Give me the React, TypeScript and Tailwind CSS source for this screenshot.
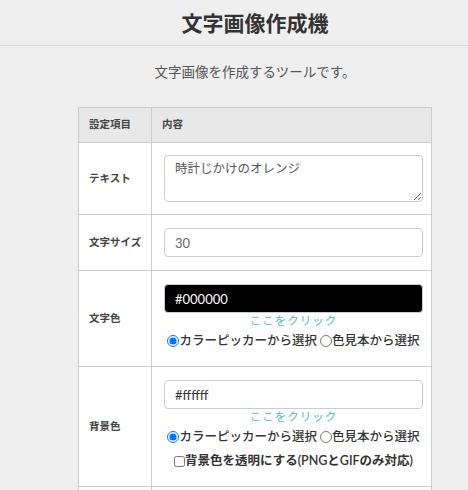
import { useState } from "react"

const font = "font-['Lato','Noto_Sans_CJK_JP',sans-serif]"

function ColorField({
  value,
  dark,
  name,
  transparentOption,
}: {
  value: string
  dark?: boolean
  name: string
  transparentOption?: boolean
}) {
  const [mode, setMode] = useState("picker")

  return (
    <div className="flex flex-col">
      <input
        type="text"
        readOnly
        value={value}
        className={`h-[29px] w-full rounded-[4px] border border-[#cccccc] px-[10px] text-[13px] outline-none ${
          dark ? "bg-black text-white" : "bg-white text-[#333]"
        }`}
      />
      <div className="h-[16px] text-center text-[11.5px] leading-[16px] tracking-[1px] text-[#4fc4a6]">
        ここをクリック
      </div>
      <div className="flex h-[24px] items-center justify-center text-[12.5px] font-medium text-[#333]">
        <label className="flex items-center">
          <input
            type="radio"
            name={name}
            checked={mode === "picker"}
            onChange={() => setMode("picker")}
            className="m-0 h-[12px] w-[12px]"
          />
          カラーピッカーから選択
        </label>
        <label className="ml-[3px] flex items-center">
          <input
            type="radio"
            name={name}
            checked={mode === "sample"}
            onChange={() => setMode("sample")}
            className="m-0 h-[12px] w-[12px]"
          />
          色見本から選択
        </label>
      </div>
      {transparentOption && (
        <label className="flex h-[24px] items-center justify-center text-[12.5px] font-semibold text-[#333]">
          <input type="checkbox" className="m-0 h-[11px] w-[11px]" />
          背景色を透明にする(PNGとGIFのみ対応)
        </label>
      )}
    </div>
  )
}

export default function App() {
  return (
    <div className={`min-h-screen bg-[#efefef] ${font}`}>
      {/* Header */}
      <header className="flex h-[46px] items-center border-b border-[#d9d9d9] pl-[42px]">
        <h1 className="flex-1 text-center text-[21px] font-bold text-[#333]">文字画像作成機</h1>
      </header>

      <main className="pl-[42px]">
        <p className="pt-[16px] text-center text-[13.5px] leading-[20px] text-[#555]">
          文字画像を作成するツールです。
        </p>

        <table className="mx-auto mt-[25px] w-[354px] table-fixed border-collapse bg-white">
          <colgroup>
            <col className="w-[73px]" />
            <col />
          </colgroup>
          <thead>
            <tr className="h-[35px] bg-[#e8e8e8]">
              <th className="border border-[#cccccc] pl-[10px] text-left text-[10.5px] font-bold text-[#444]">
                設定項目
              </th>
              <th className="border border-[#cccccc] pl-[10px] text-left text-[10.5px] font-bold text-[#444]">
                内容
              </th>
            </tr>
          </thead>
          <tbody>
            <tr>
              <td className="border border-[#cccccc] pl-[10px] text-[10.5px] font-bold text-[#444]">テキスト</td>
              <td className="border border-[#cccccc] pt-[12px] pr-[8px] pb-[12px] pl-[12px]">
                <textarea
                  defaultValue="時計じかけのオレンジ"
                  className="block h-[47px] w-full rounded-[4px] border border-[#cccccc] px-[10px] py-[4px] text-[12.5px] text-[#555] outline-none"
                />
              </td>
            </tr>
            <tr>
              <td className="border border-[#cccccc] pl-[10px] text-[10.5px] font-bold text-[#444]">文字サイズ</td>
              <td className="border border-[#cccccc] pt-[13px] pr-[8px] pb-[13px] pl-[12px]">
                <input
                  type="text"
                  defaultValue="30"
                  className="block h-[29px] w-full rounded-[4px] border border-[#cccccc] px-[10px] text-[13px] text-[#666] outline-none"
                />
              </td>
            </tr>
            <tr>
              <td className="border border-[#cccccc] pl-[10px] text-[10.5px] font-bold text-[#444]">文字色</td>
              <td className="border border-[#cccccc] pt-[13px] pr-[8px] pb-[13px] pl-[12px]">
                <ColorField value="#000000" dark name="fg" />
              </td>
            </tr>
            <tr>
              <td className="border border-[#cccccc] pl-[10px] text-[10.5px] font-bold text-[#444]">背景色</td>
              <td className="border border-[#cccccc] pt-[13px] pr-[8px] pb-[13px] pl-[12px]">
                <ColorField value="#ffffff" name="bg" transparentOption />
              </td>
            </tr>
            <tr>
              <td className="h-[40px] border border-[#cccccc]" />
              <td className="border border-[#cccccc]" />
            </tr>
          </tbody>
        </table>
      </main>
    </div>
  )
}
